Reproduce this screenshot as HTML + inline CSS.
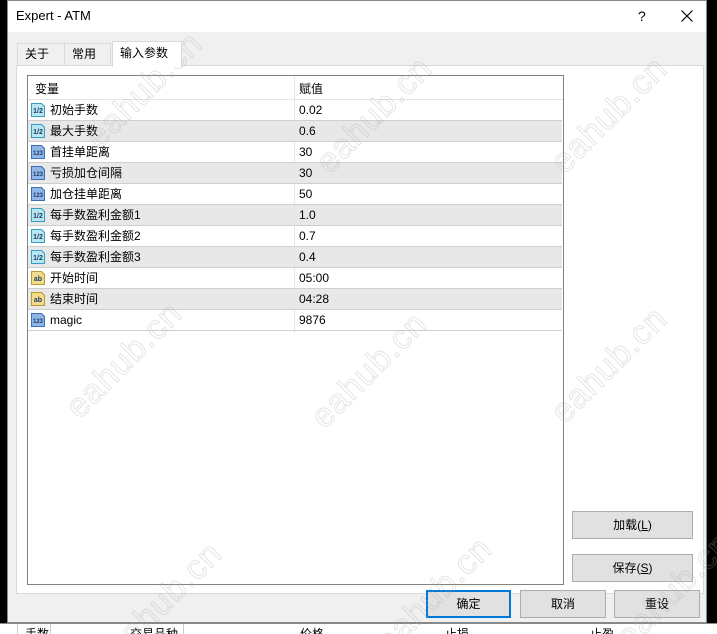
<!DOCTYPE html>
<html style="overflow:hidden"><head><meta charset="utf-8"><style>
*{margin:0;padding:0;box-sizing:border-box}
html,body{width:717px;height:634px;overflow:hidden}
body{background:#000;font-family:"Liberation Sans","Noto Sans CJK SC",sans-serif;font-size:12px;color:#000}
#wrap{position:relative;width:717px;height:634px;overflow:hidden;background:#000}
.abs{position:absolute}
#dlg{left:7px;top:0;width:700px;height:623px;background:#f0f0f0;border:1px solid #888}
#title{left:0;top:0;width:698px;height:31px;background:#fff}
.tab{position:absolute;top:42px;height:23px;border:1px solid #d9d9d9;border-bottom:none;background:#f0f0f0;font-size:12px;line-height:21px;padding-left:7px}
.btn{position:absolute;background:#e1e1e1;border:1px solid #adadad;text-align:center;font-size:12px;line-height:26px}
.row{position:absolute;left:0;width:534px;height:21px;border-bottom:1px solid #cfcfcf;line-height:20px}
.row.g{background:#e8e8e8}
.row span{position:absolute;top:0;font-size:12px;line-height:20px}
.ic{position:absolute;left:2px;top:2px;width:16px;height:16px}
.wm{position:absolute;font-size:34px;font-family:"Liberation Sans",sans-serif;color:transparent;-webkit-text-stroke:1px rgba(170,170,170,.3);transform:rotate(-45deg);letter-spacing:1px;line-height:40px}
</style></head><body><div id="wrap">
<div id="dlg" class="abs">
 <div id="title" class="abs"><span class="abs" style="left:8px;top:7px;font-size:13px;line-height:16px">Expert - ATM</span>
 <span class="abs" style="left:630px;top:7px;font-size:14px;line-height:16px">?</span>
 <svg class="abs" style="left:673px;top:9px" width="12" height="12"><path d="M0.5 0.5L11.5 11.5M11.5 0.5L0.5 11.5" stroke="#000" stroke-width="1.2"/></svg></div>
 <div class="tab" style="left:9px;width:48px">关于</div>
 <div class="tab" style="left:56px;width:47px">常用</div>
 <div class="tab" style="left:104px;top:40px;height:26px;width:70px;background:#fff;z-index:2;line-height:23px">输入参数</div>
 <div class="abs" style="left:8px;top:64px;width:688px;height:529px;background:#fff;border:1px solid #d9d9d9"></div>
 <div class="abs" style="left:19px;top:74px;width:537px;height:510px;background:#fff;border:1px solid #828282">
  <div class="abs" style="left:0;top:0;width:535px;height:24px;border-bottom:1px solid #e5e5e5;line-height:24px"><span class="abs" style="left:7px;top:1px;line-height:24px">变量</span><span class="abs" style="left:271px;top:1px;line-height:24px">赋值</span></div>
  <div class="abs" style="left:266px;top:0;width:1px;height:257px;background:#e5e5e5"></div>
  <div id="rows"></div>
 </div>
 <div class="btn" style="left:564px;top:510px;width:121px;height:28px">加载(<u>L</u>)</div>
 <div class="btn" style="left:564px;top:553px;width:121px;height:28px">保存(<u>S</u>)</div>
 <div class="btn" style="left:418px;top:589px;width:85px;height:28px;border:2px solid #0078d7;line-height:24px">确定</div>
 <div class="btn" style="left:512px;top:589px;width:86px;height:28px">取消</div>
 <div class="btn" style="left:606px;top:589px;width:86px;height:28px">重设</div>
</div>
<div class="abs" style="left:0;top:624px;width:717px;height:10px;background:#fff;overflow:hidden">
 <div class="abs" style="left:17px;top:0;width:1px;height:10px;background:#ccc"></div>
 <div class="abs" style="left:50px;top:0;width:1px;height:10px;background:#ccc"></div>
 <div class="abs" style="left:183px;top:0;width:1px;height:10px;background:#ccc"></div>
 <span class="abs" style="left:25px;top:2px;line-height:16px">手数</span><span class="abs" style="left:130px;top:2px;line-height:16px">交易品种</span><span class="abs" style="left:300px;top:2px;line-height:16px">价格</span><span class="abs" style="left:445px;top:2px;line-height:16px">止损</span><span class="abs" style="left:590px;top:2px;line-height:16px">止盈</span>
</div>
<div class="abs" style="left:0;top:623px;width:717px;height:1px;background:#888"></div>
<div class="wm" style="left:70px;top:70px">eahub.cn</div>
<div class="wm" style="left:300px;top:95px">eahub.cn</div>
<div class="wm" style="left:535px;top:95px">eahub.cn</div>
<div class="wm" style="left:50px;top:340px">eahub.cn</div>
<div class="wm" style="left:295px;top:350px">eahub.cn</div>
<div class="wm" style="left:535px;top:345px">eahub.cn</div>
<div class="wm" style="left:90px;top:580px">eahub.cn</div>
<div class="wm" style="left:360px;top:575px">eahub.cn</div>
<div class="wm" style="left:600px;top:570px">eahub.cn</div>
</div>
<script>
var d=[["d","初始手数","0.02"],["d","最大手数","0.6"],["i","首挂单距离","30"],["i","亏损加仓间隔","30"],["i","加仓挂单距离","50"],["d","每手数盈利金额1","1.0"],["d","每手数盈利金额2","0.7"],["d","每手数盈利金额3","0.4"],["s","开始时间","05:00"],["s","结束时间","04:28"],["i","magic","9876"]];
var st={d:["#b8e6f2","#3a9cc0","1/2"],i:["#8fb6e6","#3d6fb0","123"],s:["#f2dc8a","#b89a30","ab"]};
var h="";
d.forEach(function(r,k){var c=st[r[0]];
h+='<div class="row'+(k%2?' g':'')+'" style="top:'+(24+k*21)+'px"><svg class="ic" viewBox="0 0 16 16"><path d="M1.5 1.5h10l3 3v10h-13z" fill="'+c[0]+'" stroke="'+c[1]+'"/><text x="8" y="11" font-size="'+(r[0]=="i"?6:7)+'" text-anchor="middle" font-family="Liberation Sans" font-weight="bold" fill="#1b3b66">'+c[2]+'</text></svg><span style="left:22px">'+r[1]+'</span><span style="left:271px">'+r[2]+'</span></div>';});
document.getElementById("rows").innerHTML=h;
</script>
</body></html>
